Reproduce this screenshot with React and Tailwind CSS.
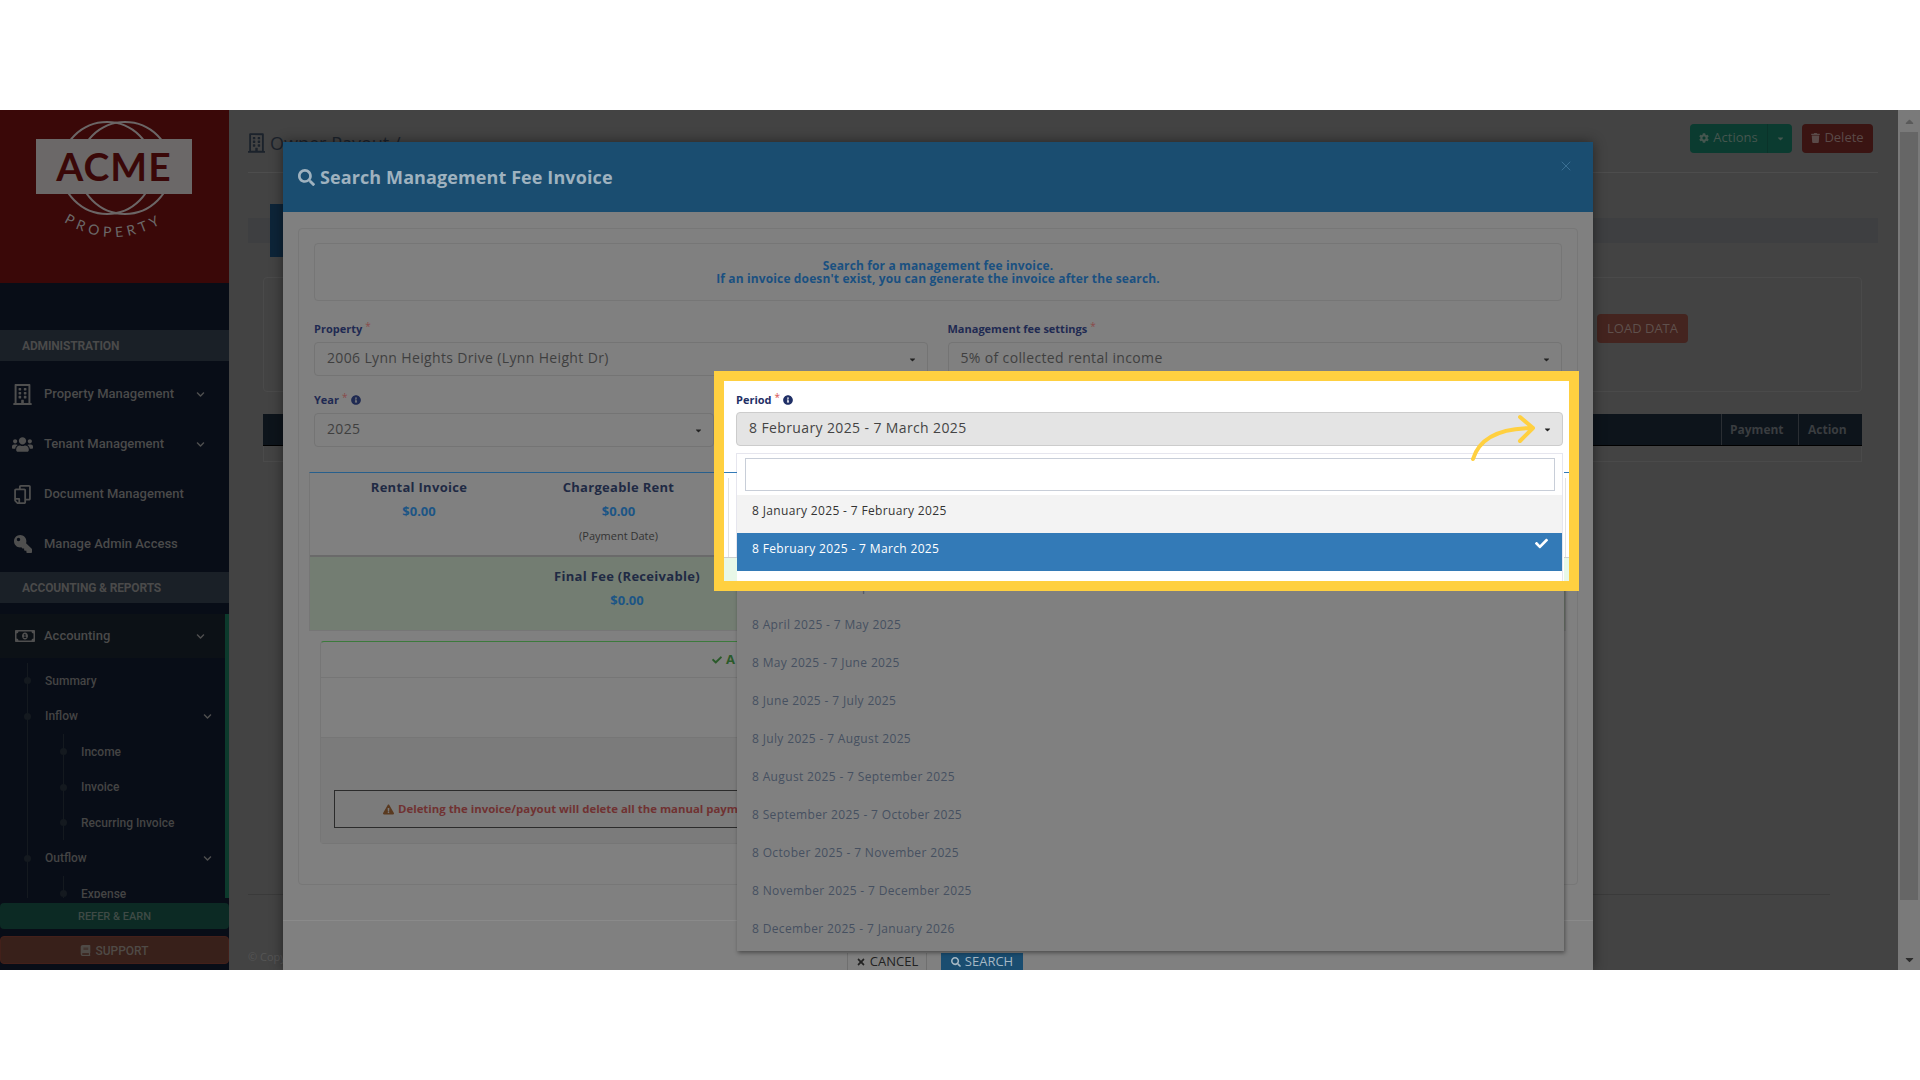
import {
    FaRegBuilding, FaUsers, FaRegCopy, FaKey, FaRegMoneyBillAlt, FaChevronDown, FaBook, FaCog, FaTrash,
    FaSearch, FaCheck, FaTimes, FaInfoCircle, FaExclamationTriangle, FaCaretDown, FaCaretUp,
} from 'react-icons/fa';
import { X } from 'lucide-react';

const PERIODS = [
    '8 March 2025 - 7 April 2025',
    '8 April 2025 - 7 May 2025',
    '8 May 2025 - 7 June 2025',
    '8 June 2025 - 7 July 2025',
    '8 July 2025 - 7 August 2025',
    '8 August 2025 - 7 September 2025',
    '8 September 2025 - 7 October 2025',
    '8 October 2025 - 7 November 2025',
    '8 November 2025 - 7 December 2025',
    '8 December 2025 - 7 January 2026',
];

const NAV_TOP = [
    { label: 'Property Management', icon: FaRegBuilding, iconClass: 'w-[21px] h-[21px]', chevron: true },
    { label: 'Tenant Management', icon: FaUsers, iconClass: 'w-[21px] h-[21px]', chevron: true },
    { label: 'Document Management', icon: FaRegCopy, iconClass: 'w-[19px] h-[19px] rotate-180' },
    { label: 'Manage Admin Access', icon: FaKey, iconClass: 'w-[18px] h-[18px] -scale-x-100' },
];

const TREE = [
    { label: 'Summary', h: 'h-[35px]' },
    { label: 'Inflow', h: 'h-[36px]', chevron: true },
    { label: 'Income', h: 'h-[35px]', sub: true },
    { label: 'Invoice', h: 'h-[36px]', sub: true },
    { label: 'Recurring Invoice', h: 'h-[35px]', sub: true },
    { label: 'Outflow', h: 'h-[36px]', chevron: true },
    { label: 'Expense', h: 'h-[35px]', sub: true },
];

function Logo() {
    return (
        <svg width="229" height="173" viewBox="0 0 229 173">
            <defs>
                <path id="logo-arc" d="M64 112 Q113 142 164 112" />
            </defs>
            <circle cx="107" cy="58" r="46" fill="none" stroke="#6b6666" strokeWidth="2" />
            <circle cx="125" cy="58" r="46" fill="none" stroke="#6b6666" strokeWidth="2" />
            <rect x="36" y="29" width="156" height="55" fill="#6b6868" />
            <text x="114" y="71" textAnchor="middle" fontFamily="Lato" fontWeight="700" fontSize="39" letterSpacing="1" fill="#3a0808">ACME</text>
            <text fontFamily="Lato" fontSize="14" letterSpacing="4.5" fill="#6b6868">
                <textPath href="#logo-arc" startOffset="50%" textAnchor="middle">PROPERTY</textPath>
            </text>
        </svg>
    );
}

function SectionBar({ children, className }) {
    return (
        <div className={`h-[31px] bg-[#1a2027] flex items-center pl-[22px] text-[12px] font-bold tracking-[-0.15px] text-[#4a4a4a] ${className}`}>
            {children}
        </div>
    );
}

function Sidebar() {
    return (
        <aside className="w-[229px] shrink-0 h-full bg-[#080d17] flex flex-col font-['Roboto',sans-serif]">
            <div className="h-[173px] bg-[#3a0808]"><Logo /></div>
            <div className="h-[47px]" />
            <SectionBar>ADMINISTRATION</SectionBar>
            <div className="h-[8px]" />
            {NAV_TOP.map((item) => (
                <div key={item.label} className="h-[50px] flex items-center pl-[10px] pr-[24px] text-[13px] font-medium text-[#4a4a4a]">
                    <span className="w-[25px] shrink-0 flex justify-center">
                        <item.icon className={`${item.iconClass} text-[#4f4f4f]`} />
                    </span>
                    <span className="ml-[9px] flex-1">{item.label}</span>
                    {item.chevron && <FaChevronDown className="w-[9px] h-[9px] text-[#4f4f4f]" />}
                </div>
            ))}
            <SectionBar className="mt-[3px]">ACCOUNTING &amp; REPORTS</SectionBar>
            <div className="h-[11px]" />
            <div className="h-[284px] border-r-4 border-[#0c3a2c] overflow-hidden">
                <div className="h-[44px] bg-[#0c1116] flex items-center pl-[15px] pr-[20px] text-[13px] font-medium text-[#4a4a4a]">
                    <FaRegMoneyBillAlt className="w-[20px] h-[20px] shrink-0 text-[#4f4f4f]" />
                    <span className="ml-[9px] flex-1">Accounting</span>
                    <FaChevronDown className="w-[9px] h-[9px] text-[#4f4f4f]" />
                </div>
                <div className="mt-[5px] ml-[27px] border-l border-[#14191f]">
                    {TREE.map((row) => (
                        <div key={row.label} className={`${row.h} flex items-center text-[12px] font-medium text-[#444] relative ${row.sub ? 'ml-[35px] pl-[17px] border-l border-[#14191f]' : 'pl-[17px]'}`}>
                            <span className="absolute -left-[4px] w-[7px] h-[7px] rounded-full bg-[#14191f]" />
                            <span className="flex-1">{row.label}</span>
                            {row.chevron && <FaChevronDown className="w-[9px] h-[9px] mr-[13px] text-[#4f4f4f]" />}
                        </div>
                    ))}
                </div>
            </div>
            <div className="h-[5px]" />
            <div className="h-[26px] bg-[#0c2a24] rounded-sm flex items-center justify-center pt-[2px] text-[11px] font-medium text-[#3f4a46]">REFER &amp; EARN</div>
            <div className="h-[7px]" />
            <div className="h-[28px] bg-[#38201a] border border-[#43201a] rounded-sm flex items-center justify-center gap-1 pt-[1px] text-[12px] font-medium text-[#4f4a46]">
                <FaBook className="w-[11px] h-[11px]" />
                SUPPORT
            </div>
        </aside>
    );
}

function MainBehind() {
    return (
        <main className="flex-1 h-full bg-[#434343] flex flex-col pl-[19px] pr-[20px]">
            <div className="h-[63px] flex items-center justify-between border-b border-[#4d4d4d] pr-[5px] pb-[6px] shrink-0">
                <div className="flex items-center gap-[5px] mt-[10px] text-[18px] text-[#1b222b]">
                    <FaRegBuilding className="w-[17px] h-[20px]" />
                    Owner Payout /
                </div>
                <div className="flex items-center gap-[10px]">
                    <div className="h-[29px] w-[102px] bg-[#0b3b30] rounded-sm flex items-center text-[13px] text-[#45564f]">
                        <div className="flex-1 flex items-center justify-center gap-1 border-r border-[#0a332a] h-full">
                            <FaCog className="w-[10px] h-[10px]" />Actions
                        </div>
                        <div className="w-[24px] flex justify-center"><FaCaretDown className="w-[9px] h-[9px]" /></div>
                    </div>
                    <div className="h-[29px] w-[71px] bg-[#3a1412] rounded-sm flex items-center justify-center gap-1 text-[13px] text-[#5a4a48]">
                        <FaTrash className="w-[9px] h-[10px]" />Delete
                    </div>
                </div>
            </div>
            <div className="h-[45px] shrink-0" />
            <div className="h-[25px] bg-[#3e3f41] shrink-0 flex items-center">
                <div className="ml-[22px] w-[60px] h-[53px] bg-[#0d2438] shrink-0" />
            </div>
            <div className="h-[34px] shrink-0" />
            <div className="h-[115px] ml-[15px] mr-[16px] border border-[#4a4a4a] rounded-sm shrink-0 pl-[1333px] pt-[36px]">
                <div className="w-[91px] h-[29px] bg-[#44241f] rounded-sm flex items-center justify-center text-[13px] text-[#5f504c]">LOAD DATA</div>
            </div>
            <div className="h-[22px] shrink-0" />
            <div className="h-[32px] ml-[15px] mr-[16px] bg-[#0d141b] border-b border-black shrink-0 flex justify-end text-[12px] font-bold text-[#3a3d40]">
                <div className="w-[77px] flex items-center pl-[8px] border-l border-[#2a2e33]">Payment</div>
                <div className="w-[64px] flex items-center pl-[9px] border-l border-[#2a2e33]">Action</div>
            </div>
            <div className="h-[16px] ml-[15px] mr-[16px] border border-t-0 border-[#4a4a4a] shrink-0" />
            <div className="flex-1" />
            <div className="h-[76px] border-t border-[#3a3a3a] mr-[48px] shrink-0 pt-[54px] text-[11px] text-[#555]">© Copyright</div>
        </main>
    );
}

function Scrollbar() {
    return (
        <div className="w-[22px] shrink-0 h-full bg-[#7a7a7a] flex flex-col items-center">
            <div className="h-[22px] flex items-center"><FaCaretUp className="w-[13px] h-[13px] text-[#5a5a5a]" /></div>
            <div className="w-[18px] h-[768px] bg-[#666666]" />
            <div className="flex-1" />
            <div className="h-[22px] flex items-center"><FaCaretDown className="w-[13px] h-[13px] text-[#2c2c2c]" /></div>
        </div>
    );
}

function FieldLabel({ text, info, dim = true }) {
    return (
        <div className={`flex items-center text-[11px] font-bold h-[14px] ${dim ? 'text-[#1f2a52]' : 'text-[#1f2f66]'}`}>
            {text}
            <span className={`ml-[3px] -mt-[5px] text-[10px] font-normal ${dim ? 'text-[#8a4a4a]' : 'text-[#d9534f]'}`}>*</span>
            {info && <FaInfoCircle className="ml-[3px] w-[10px] h-[10px]" />}
        </div>
    );
}

function DimSelect({ value, className }) {
    return (
        <div className={`h-[34px] border border-[#747474] rounded-sm flex items-center justify-between pl-[12px] pr-[10px] pb-[3px] text-[14px] tracking-[0.35px] text-[#3f3f3f] ${className}`}>
            {value}
            <FaCaretDown className="w-[9px] h-[9px] mt-[3px] text-[#222]" />
        </div>
    );
}

function Figure({ title, note }) {
    return (
        <div className="flex flex-col items-center">
            <div className="text-[13px] font-bold tracking-[0.3px] text-[#1f2a44] h-[24px] flex items-center">{title}</div>
            <div className="text-[13px] font-bold text-[#1c5585] h-[24px] flex items-center">$0.00</div>
            {note && <div className="text-[11px] text-[#333] h-[24px] flex items-center">{note}</div>}
        </div>
    );
}

function SearchModal() {
    return (
        <div className="absolute left-[283px] top-[32px] w-[1310px] h-[828px] bg-[#808080] shadow-[0_0_12px_rgba(0,0,0,0.45)] flex flex-col overflow-hidden">
            <div className="h-[70px] bg-[#1a4d70] shrink-0 flex items-center justify-between pl-[15px] pr-[19px]">
                <div className="flex items-center gap-[5px] text-[18px] font-bold tracking-[0.1px] text-[#9fb2bf]">
                    <FaSearch className="w-[17px] h-[17px]" />
                    Search Management Fee Invoice
                </div>
                <X className="w-[16px] h-[16px] text-[#3a6f93] -mt-[22px]" strokeWidth={1.5} />
            </div>
            <div className="mx-[15px] mt-[16px] h-[657px] border border-[#777] rounded-sm px-[15px] pt-[14px] shrink-0">
                <div className="h-[58px] border border-[#767676] rounded-sm flex flex-col items-center justify-center text-[12px] font-bold tracking-[0.13px] leading-[13px] text-[#1a5080]">
                    <span>Search for a management fee invoice.</span>
                    <span>If an invoice doesn't exist, you can generate the invoice after the search.</span>
                </div>
                <div className="mt-[21px] flex gap-[20px]">
                    <div className="w-[615px]">
                        <FieldLabel text="Property" />
                        <DimSelect className="mt-[6px]" value="2006 Lynn Heights Drive (Lynn Height Dr)" />
                    </div>
                    <div className="w-[616px]">
                        <FieldLabel text="Management fee settings" />
                        <DimSelect className="mt-[6px]" value="5% of collected rental income" />
                    </div>
                </div>
                <div className="mt-[17px] w-[400px]">
                    <FieldLabel text="Year" info />
                    <DimSelect className="mt-[6px]" value="2025" />
                </div>
                <div className="-ml-[5px] mr-[-4px] mt-[25px] border border-[#767676] border-t-[#275f8c] flex flex-col">
                    <div className="h-[84px] border-b-2 border-[#6a6a6a] flex pt-[3px]">
                        <div className="w-[218px]"><Figure title="Rental Invoice" /></div>
                        <div className="w-[181px]"><Figure title="Chargeable Rent" note="(Payment Date)" /></div>
                    </div>
                    <div className="h-[73px] bg-[#737d72] flex pt-[8px]">
                        <div className="w-[634px]"><Figure title="Final Fee (Receivable)" /></div>
                    </div>
                </div>
                <div className="mx-[6px] mt-[10px] h-[203px] border border-[#767676] border-t-[#3c7a3c] rounded-sm flex flex-col">
                    <div className="h-[36px] border-b border-[#767676] flex items-center pl-[391px] gap-1 text-[13px] font-bold text-[#2a5a2a]">
                        <FaCheck className="w-[10px] h-[10px]" />A
                    </div>
                    <div className="h-[60px] border-b border-[#767676]" />
                    <div className="flex-1 bg-[#7b7b7b] px-[13px] pt-[52px]">
                        <div className="h-[38px] border border-[#2b2b2b] flex items-center pl-[48px] gap-1 text-[11.4px] font-bold text-[#703232] whitespace-nowrap">
                            <FaExclamationTriangle className="w-[11px] h-[11px] text-[#5a3a20]" />
                            Deleting the invoice/payout will delete all the manual payments
                        </div>
                    </div>
                </div>
            </div>
            <div className="mt-[35px] border-t border-[#8a8a8a] flex-1 flex items-end pl-[564px] gap-[14px]">
                <div className="h-[17px] w-[80px] border-x border-[#6f6f6f] flex items-center justify-center gap-1 text-[13px] text-[#222]">
                    <FaTimes className="w-[10px] h-[10px]" />CANCEL
                </div>
                <div className="h-[17px] w-[82px] bg-[#1a4d70] flex items-center justify-center gap-1 text-[13px] text-[#a6b8c4]">
                    <FaSearch className="w-[10px] h-[10px]" />SEARCH
                </div>
            </div>
            {/* lista aberta do select, por cima do painel */}
            <div className="absolute left-[454px] top-[311px] w-[827px] h-[498px] bg-[#808080] shadow-[1px_2px_4px_rgba(0,0,0,0.4)] pt-[118px]">
                {PERIODS.map((p) => (
                    <div key={p} className="h-[38px] flex items-center pl-[15px] pb-[7px] text-[12px] tracking-[0.35px] text-[#465060]">{p}</div>
                ))}
            </div>
        </div>
    );
}

function Highlight() {
    return (
        <div className="absolute left-[714px] top-[261px] w-[865px] h-[220px] border-[10px] border-[#ffd040] bg-white overflow-hidden">
            {/* o que aparece do painel atrás do recorte */}
            <div className="absolute left-0 top-[91px] w-[13px] h-px bg-[#337ab7]" />
            <div className="absolute left-[4px] top-[97px] w-px h-[79px] bg-[#e2e2e2]" />
            <div className="absolute left-0 top-[176px] w-[13px] h-px bg-[#cfcfcf]" />
            <div className="absolute left-0 top-[177px] w-[13px] h-[23px] bg-[#e8f8e8]" />
            <div className="absolute right-0 top-[91px] w-[5px] h-px bg-[#337ab7]" />
            <div className="absolute right-[3px] top-[97px] w-px h-[79px] bg-[#e2e2e2]" />
            <div className="absolute right-0 top-[176px] w-[5px] h-px bg-[#cfcfcf]" />
            <div className="absolute right-0 top-[177px] w-[5px] h-[23px] bg-[#e8f8e8]" />
            <div className="pl-[12px] pr-[6px] pt-[12px]">
                <FieldLabel text="Period" info dim={false} />
                <div className="mt-[5px] h-[34px] bg-[#e4e4e4] border border-[#cccccc] rounded-sm flex items-center justify-between pl-[12px] pr-[10px] pb-[3px] text-[14px] tracking-[0.38px] text-[#444]">
                    8 February 2025 - 7 March 2025
                    <FaCaretDown className="w-[9px] h-[9px] mt-[3px] text-[#222]" />
                </div>
                <div className="mt-[7px] border border-[#e6e6ee] border-b-0 bg-white h-[140px]">
                    <div className="ml-[8px] mr-[7px] mt-[4px] h-[33px] border border-[#c8ced8]" />
                    <div className="mt-[4px] h-[38px] bg-[#f3f3f3] flex items-center pl-[15px] pb-[7px] text-[12px] tracking-[0.35px] text-[#333]">8 January 2025 - 7 February 2025</div>
                    <div className="h-[38px] bg-[#337ab7] flex items-center justify-between pl-[15px] pr-[14px] pb-[7px] text-[12px] tracking-[0.35px] text-white">
                        8 February 2025 - 7 March 2025
                        <FaCheck className="w-[13px] h-[13px] -mt-[11px]" />
                    </div>
                </div>
            </div>
            <svg className="absolute left-[735px] top-[22px]" width="80" height="70" viewBox="0 0 80 70" fill="none">
                <path d="M14 56 C 20 36 40 25 74 25 M61 14 L74 25 L61 38" stroke="#ffd040" strokeWidth="4" strokeLinecap="round" strokeLinejoin="round" />
            </svg>
        </div>
    );
}

export default function App() {
    return (
        <div className="w-[1920px] h-[1080px] bg-white overflow-hidden font-['Open_Sans',sans-serif]">
            <div className="h-[110px]" />
            <div className="h-[860px] flex relative overflow-hidden">
                <Sidebar />
                <MainBehind />
                <Scrollbar />
                <SearchModal />
                <Highlight />
            </div>
        </div>
    );
}
